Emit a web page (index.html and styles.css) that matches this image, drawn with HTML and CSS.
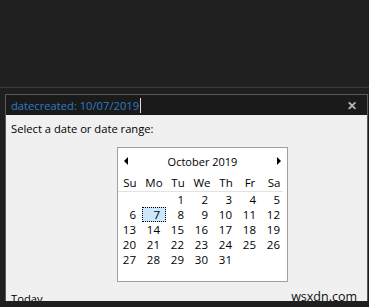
FILE: index.html
```html
<!DOCTYPE html>
<html lang="en">
<head>
    <meta charset="UTF-8">
    <meta name="viewport" content="width=device-width, initial-scale=1.0">
    <title>Date picker</title>
    <link rel="stylesheet" href="styles.css">
</head>
<body>
    <div class="topbar"></div>
    <div class="popup">
        <div class="search">
            <span class="query">datecreated: 10/07/2019</span><span class="caret"></span>
            <span class="close">&#x2715;</span>
        </div>
        <div class="panel">
            <p class="prompt">Select a date or date range:</p>
            <div class="calendar">
                <div class="cal-head">
                    <span class="arrow left"></span>
                    <span class="month">October 2019</span>
                    <span class="arrow right"></span>
                </div>
                <div class="weekdays">
                    <span>Su</span><span>Mo</span><span>Tu</span><span>We</span><span>Th</span><span>Fr</span><span>Sa</span>
                </div>
                <div class="days">
                    <span></span><span></span><span>1</span><span>2</span><span>3</span><span>4</span><span>5</span>
                    <span>6</span><span class="selected">7</span><span>8</span><span>9</span><span>10</span><span>11</span><span>12</span>
                    <span>13</span><span>14</span><span>15</span><span>16</span><span>17</span><span>18</span><span>19</span>
                    <span>20</span><span>21</span><span>22</span><span>23</span><span>24</span><span>25</span><span>26</span>
                    <span>27</span><span>28</span><span>29</span><span>30</span><span>31</span>
                </div>
            </div>
            <p class="today">Today</p>
            <span class="watermark">wsxdn.com</span>
        </div>
    </div>
</body>
</html>
```

FILE: styles.css
```css
body {
    margin: 0;
    background: #1f1f1f;
    font-family: "Open Sans", "Noto Sans", sans-serif;
    font-size: 11px;
    color: #000;
    overflow: hidden;
}
.topbar {
    height: 87px;
    background: #202020;
    border-bottom: 1px solid #3a3a3a;
    margin-bottom: 6px;
}
.popup {
    margin-left: 5px;
    width: 361px;
    border: 1px solid #5a5a5a;
    border-bottom: none;
}
.search {
    height: 20px;
    background: #1a1a1a;
    display: flex;
    align-items: center;
    padding: 0 5px;
}
.query {
    color: #2d7cc4;
    font-size: 11.2px;
}
.caret {
    width: 1px;
    height: 15px;
    background: #e0e0e0;
    margin-left: 1px;
}
.close {
    margin-left: auto;
    margin-right: 5px;
    color: #b8b8b8;
    font-size: 12px;
    font-weight: bold;
}
.panel {
    position: relative;
    height: 186px;
    background: #f0f0f0;
    padding: 6px 5px 0;
    box-sizing: border-box;
}
.prompt {
    margin: 0 0 10px;
    line-height: 16px;
    font-size: 11.2px;
}
.calendar {
    margin-left: 106px;
    width: 169px;
    background: #fff;
    border: 1px solid #a0a0a0;
    padding-bottom: 14px;
}
.cal-head {
    height: 26px;
    display: flex;
    align-items: center;
    justify-content: space-between;
    padding: 0 6px;
}
.arrow {
    width: 0;
    height: 0;
    border-top: 4px solid transparent;
    border-bottom: 4px solid transparent;
}
.arrow.left {
    border-right: 4px solid #000;
}
.arrow.right {
    border-left: 4px solid #000;
}
.weekdays {
    display: grid;
    grid-template-columns: repeat(7, 24px);
    height: 17px;
    align-items: center;
    border-bottom: 1px solid #e3e3e3;
    margin: 0 4px 0 0;
    font-size: 11.5px;
}
.weekdays span {
    text-align: center;
}
.days {
    display: grid;
    grid-template-columns: repeat(7, 24px);
    grid-auto-rows: 15px;
    font-size: 11.5px;
}
.days span {
    text-align: right;
    padding-right: 6px;
    line-height: 15px;
}
.days .selected {
    background: #cce8ff;
    outline: 1px dotted #000;
    outline-offset: -1px;
}
.today {
    margin: 9px 0 0;
    line-height: 16px;
    font-size: 11.2px;
}
.watermark {
    position: absolute;
    right: 10px;
    top: 173px;
    font-size: 12.5px;
    color: #111;
}
```
